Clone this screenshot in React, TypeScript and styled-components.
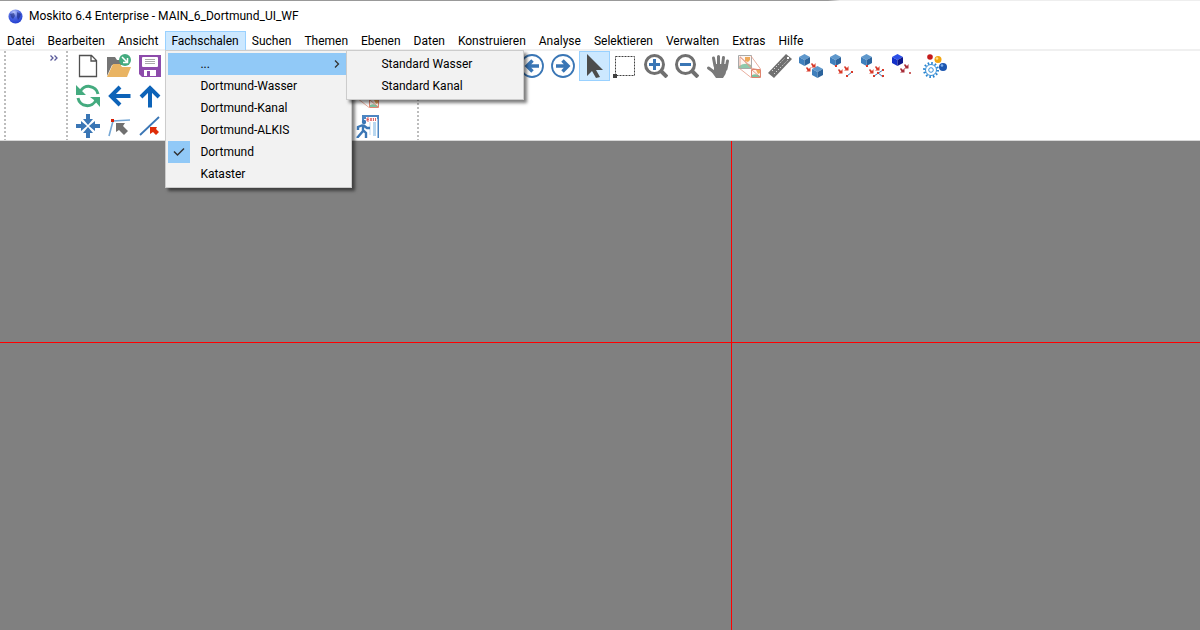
import React from "react";
import styled, { createGlobalStyle } from "styled-components";

const Global = createGlobalStyle`
  * { box-sizing: border-box; }
  body { margin: 0; background: #fff; color: #000; font: 12px/16px Roboto, "Open Sans", sans-serif; }
  button { font: inherit; color: inherit; }
`;

const Window = styled.div`
  display: flex;
  flex-direction: column;
  min-height: 100vh;
  overflow: hidden;
`;

const TitleBar = styled.header`
  display: flex;
  align-items: center;
  gap: 6px;
  height: 31px;
  padding: 1px 8px 0;
  background: linear-gradient(to right, #999 69%, #eee 70%) top / 100% 1px no-repeat;
`;

const Title = styled.h1`
  margin: 0;
  font-size: 12px;
  font-weight: 400;
  line-height: 16px;
  white-space: nowrap;
`;

const MenuBar = styled.nav`
  display: flex;
  height: 20px;
  padding-left: 1px;
  border-bottom: 2px solid #f0f0f0;
`;

const MenuSlot = styled.div`
  position: relative;
`;

const MenuTitle = styled.button<{ $open?: boolean }>`
  height: 20px;
  padding: 0 6px 0 5px;
  white-space: nowrap;
  line-height: 18px;
  border: 1px solid ${(p) => (p.$open ? "#99d1ff" : "transparent")};
  background: ${(p) => (p.$open ? "#cce8ff" : "transparent")};
`;

const Popup = styled.div`
  position: absolute;
  z-index: 2;
  top: 19px;
  left: 0;
  width: 187px;
  padding: 2px;
  border: 1px solid #ccc;
  background: #f2f2f2;
  box-shadow: 3px 3px 3px rgba(0, 0, 0, 0.5);
`;

const SubPopup = styled(Popup)`
  top: -1px;
  left: 180px;
  width: 178px;
`;

const PopupItem = styled.button<{ $active?: boolean }>`
  display: grid;
  grid-template-columns: 22px 1fr 16px;
  column-gap: 10px;
  align-items: center;
  width: 100%;
  height: 22px;
  padding: 0;
  border: 0;
  text-align: left;
  white-space: nowrap;
  background: ${(p) => (p.$active ? "#91c9f7" : "transparent")};
`;

const CheckCell = styled.span<{ $on?: boolean }>`
  display: flex;
  align-items: center;
  justify-content: center;
  height: 22px;
  background: ${(p) => (p.$on ? "#91c9f7" : "transparent")};
`;

const ToolArea = styled.div`
  display: flex;
  height: 90px;
  padding-left: 4px;
  border-bottom: 1px solid #d8d8d8;
`;

const Bar = styled.div<{ $width?: number }>`
  display: flex;
  flex: none;
  gap: 5px;
  width: ${(p) => (p.$width ? p.$width + "px" : "auto")};
`;

const Grip = styled.div`
  width: 2px;
  background: repeating-linear-gradient(#bdbdbd 0 2px, transparent 2px 4px);
`;

const Overflow = styled.button`
  display: flex;
  align-self: flex-start;
  margin-left: auto;
  padding: 4px 8px;
  border: 0;
  background: none;
`;

const Buttons = styled.div`
  display: grid;
  grid-auto-columns: 31px;
  grid-template-rows: repeat(3, 30px);
`;

const Tool = styled.button<{ $row: number; $col: number; $active?: boolean }>`
  display: flex;
  align-items: center;
  justify-content: center;
  grid-area: ${(p) => p.$row} / ${(p) => p.$col};
  padding: 0 1px 0 0;
  border: 1px solid ${(p) => (p.$active ? "#99d1ff" : "transparent")};
  background: ${(p) => (p.$active ? "#cce8ff" : "transparent")};
`;

const Canvas = styled.main`
  position: relative;
  flex: 1;
  min-height: 200px;
  background: #808080;
`;

const HorizontalAxis = styled.div`
  position: absolute;
  top: 41.2%;
  width: 100%;
  height: 1px;
  background: #f00;
`;

const VerticalAxis = styled.div`
  position: absolute;
  left: 60.9%;
  width: 1px;
  height: 100%;
  background: #f00;
`;

const blue = "#0d63b8";
const steel = "#3a76b5";
const grey = "#707070";

const Cube = ({ x, y, c = "#3f7fbc", top = "#5f98cc", side = "#2b639c" }: { x: number; y: number; c?: string; top?: string; side?: string }) => (
  <g transform={`translate(${x} ${y})`}>
    <path d="M0 3 5.500 0 11 3 5.500 6z" fill={top} />
    <path d="M0 3v6l5.500 3V6z" fill={c} />
    <path d="M11 3v6l-5.500 3V6z" fill={side} />
  </g>
);

const RedArrow = ({ x, y, c = "#d83a2a" }: { x: number; y: number; c?: string }) => (
  <path transform={`translate(${x} ${y})`} d="M0 1 1 0 3 2 4.500 0V4.500H0L1.500 3.500z" fill={c} />
);

const MapSheets = () => (
  <g fill="none">
    <path d="M1.500 1.500h13v13h-13z" fill="#fdf6f2" stroke="#a9a9a9" />
    <path d="M2 12q6-4 12-1v3H2z" fill="#8fc9ac" />
    <path d="M8 3h5v3l-2 2-3-1z" fill="#eda95a" />
    <path d="M3 2.500l11 10M2 14l12 9.500M14 2l9.500 13M3 3v10M3 3l20 20M14 14l9 2" stroke="#e39a86" strokeWidth=".8" />
    <path d="M14.500 15.500h9v8h-9z" fill="#fff4ed" stroke="#df8570" />
    <path d="M15 21q4-2 8 1v1h-8z" fill="#7fc2a0" />
    <path d="M19 16h4v3l-2 1z" fill="#eda95a" />
    <path d="M15 16l8 7" stroke="#df8570" strokeWidth=".8" />
  </g>
);

const icons: Record<string, React.ReactNode> = {
  new: <path d="M3.500 1.500h12l5 5v16h-17zM15 1.500v5.500h5.500" fill="#fff" stroke="#505050" strokeWidth="1.300" />,
  open: (
    <>
      <path d="M0 3h8l2 3h6v5H5L0 22z" fill="#757575" />
      <path d="M6 10h7l2 3h9l-4 10H0z" fill="#e9b463" />
      <circle cx="18" cy="6" r="6" fill="#44ab7f" />
      <path d="M15 3l5 5M20.500 4v4.500H16" stroke="#fff" strokeWidth="1.500" fill="none" />
    </>
  ),
  save: (
    <>
      <path d="M1 1h22v22H4l-3-3z" fill="#8d4bab" />
      <rect x="4" y="3" width="16" height="10" rx="1" fill="#fff" />
      <path d="M7 5.500h10M7 7.500h10M7 9.500h10" stroke="#aaa" />
      <path d="M6 16h12v6H6z" fill="#fff" />
      <path d="M9 17h3v5H9z" fill="#8d4bab" />
    </>
  ),
  refresh: (
    <>
      <path d="M4 8A9.500 9.500 0 0 1 22 10M20 16A9.500 9.500 0 0 1 2 14" fill="none" stroke="#44ab7f" strokeWidth="3" />
      <path d="M0 1v10h10L7 8zM24 23V13H14l4 3z" fill="#44ab7f" />
    </>
  ),
  left: <path d="M23.500 12H3M13 3l-9 9 9 9" fill="none" stroke={blue} strokeWidth="4" />,
  up: <path d="M12 23.500V3M3 13l9-9 9 9" fill="none" stroke={blue} strokeWidth="4" />,
  center: (
    <path d="M10 0h4v5h3l-5 6-5-6h3zM10 24h4v-5h3l-5-6-5 6h3zM0 10v4h5v3l6-5-6-5v3zM24 10v4h-5v3l-6-5 6-5v3z" fill={steel} />
  ),
  vertex: (
    <>
      <path d="M23 6 6 7 2 22" fill="none" stroke="#75a7d5" strokeWidth="1.600" />
      <rect x="4" y="5" width="3" height="3" fill="#d81e05" />
      <path d="M9 9h9l-2 3 5 5-4 4-5-5-3 2z" fill={grey} />
    </>
  ),
  segment: (
    <>
      <path d="M2 21 21 3" stroke={steel} strokeWidth="1.800" />
      <path d="M12 13h7l-1 2 3 3-3 3-3-3-3 2z" fill="#df2c08" />
    </>
  ),
  sheets: <MapSheets />,
  exit: (
    <>
      <path d="M7 1h17v23h-1.500V5H9v3H7z" fill="#4d86c2" />
      <path d="M14 7h2v14h-2z" fill="#dcebf8" />
      <path d="M18 6h3v16h-3z" fill="#b8d7f0" />
      <path d="M11 3h11v5H11z" fill="#fff" />
      <path d="M12 4v3M12 4h2M12 5.500h2M12 7h2M15 4l2 3M17 4l-2 3M18.500 4v3M20.500 4v3" stroke="#d84040" strokeWidth=".8" />
      <circle cx="9" cy="8" r="2.200" fill={steel} />
      <path d="M8 11 3 13v3M8 11l4 3h3M8 11v6l-6 7M8 16l3 3v5" fill="none" stroke={steel} strokeWidth="2.400" />
    </>
  ),
  back: (
    <>
      <circle cx="12" cy="12" r="11" fill="none" stroke={steel} strokeWidth="1.800" />
      <path d="M19 12H7M12.500 6.500 7 12l5.500 5.500" fill="none" stroke={steel} strokeWidth="3.500" />
    </>
  ),
  forward: (
    <>
      <circle cx="12" cy="12" r="11" fill="none" stroke={steel} strokeWidth="1.800" />
      <path d="M5 12H17M11.500 6.500 17 12l-5.500 5.500" fill="none" stroke={steel} strokeWidth="3.500" />
    </>
  ),
  cursor: <path d="M5 0v22l5-5 4 7 4-1-4-7h7z" fill="#4c4c4c" />,
  marquee: (
    <>
      <rect x="2.500" y="2.500" width="19" height="19" fill="none" stroke="#404040" strokeDasharray="2 1" />
      <path d="M0 20h4v4H0z" fill="#404040" />
    </>
  ),
  zoomIn: (
    <>
      <path d="M17 17l6 6" stroke={grey} strokeWidth="4" />
      <circle cx="10.500" cy="10.500" r="9" fill="#fff" stroke={grey} strokeWidth="3" />
      <path d="M5 10.500h11M10.500 5v11" stroke={steel} strokeWidth="3" />
    </>
  ),
  zoomOut: (
    <>
      <path d="M17 17l6 6" stroke={grey} strokeWidth="4" />
      <circle cx="10.500" cy="10.500" r="9" fill="#fff" stroke={grey} strokeWidth="3" />
      <path d="M5 10.500h11" stroke={steel} strokeWidth="3" />
    </>
  ),
  hand: (
    <>
      <path d="M9 12 7.500 4M12.500 12V2.500M16.500 12l1-8.500M20 15l1.500-8M8 18l-5.500-4" stroke="#7a7a7a" strokeWidth="3" strokeLinecap="round" />
      <path d="M8 10h12l1.500 2-2 8-2.500 4h-7l-5-7 3-1z" fill="#7a7a7a" />
    </>
  ),
  ruler: (
    <>
      <path d="M0 19 18 0l6 5L6 24z" fill={grey} />
      <path d="M4 17 17 4M6 20 20 6" stroke="#fff" strokeWidth="1" strokeDasharray="1 2" />
      <path d="M19 3l2 2M21 3l-2 2" stroke="#fff" />
    </>
  ),
  cubes: (<><Cube x={0} y={0} /><Cube x={13} y={12} /><RedArrow x={12} y={9} /><RedArrow x={7} y={13} /></>),
  cubeLine: (
    <>
      <Cube x={0} y={0} /><RedArrow x={14} y={12} /><RedArrow x={8} y={15} />
      <path d="M17 22l5-4" stroke={steel} /><path d="M16 21h2v2h-2zM21 17h2v2h-2zM5 11h2v2H5z" fill="#d83a2a" />
    </>
  ),
  cubeNet: (
    <>
      <Cube x={0} y={0} /><RedArrow x={14} y={12} /><RedArrow x={8} y={15} />
      <path d="M13 22l9-6M16 18l6 5" stroke={steel} />
      <path d="M12 21h2v2h-2zM21 15h2v2h-2zM21 21h2v2h-2zM16 18h2v2h-2zM5 11h2v2H5z" fill="#d83a2a" />
    </>
  ),
  cubePoint: (
    <>
      <Cube x={0} y={0} c="#1430c8" top="#2c50e8" side="#0c168a" />
      <RedArrow x={12} y={10} c="#a82c38" /><RedArrow x={8} y={14} c="#a82c38" />
      <path d="M17 18h2v2h-2z" fill="#c66" />
    </>
  ),
  gear: (
    <>
      <circle cx="8" cy="16" r="6.800" fill="#fff" stroke="#2684d0" strokeWidth="2.400" strokeDasharray="1.600 1.960" />
      <circle cx="8" cy="16" r="5.500" fill="#fff" stroke="#2684d0" strokeWidth=".9" />
      <circle cx="8" cy="16" r="2.300" fill="#fff" stroke="#2684d0" strokeWidth=".9" />
      <circle cx="7" cy="3" r="2.800" fill="#c41a1a" />
      <circle cx="15" cy="5.500" r="3.500" fill="#f2a510" />
      <circle cx="14" cy="4.500" r="1.300" fill="#ffe08a" />
      <circle cx="20" cy="13" r="4" fill="#1c56b0" />
      <circle cx="19" cy="11.500" r="1.300" fill="#7fb0ee" />
    </>
  ),
};

const Icon = ({ name }: { name: string }) => (
  <svg width="24" height="24" viewBox="0 0 24 24" aria-hidden="true">{icons[name]}</svg>
);

type ToolDef = { icon: string; label: string; row: number; col: number; active?: boolean };

const fileTools: ToolDef[] = [
  { icon: "new", label: "Neu", row: 1, col: 1 },
  { icon: "open", label: "Öffnen", row: 1, col: 2 },
  { icon: "save", label: "Speichern", row: 1, col: 3 },
  { icon: "refresh", label: "Aktualisieren", row: 2, col: 1 },
  { icon: "left", label: "Nach links", row: 2, col: 2 },
  { icon: "up", label: "Nach oben", row: 2, col: 3 },
  { icon: "sheets", label: "Kartenblätter", row: 2, col: 10 },
  { icon: "center", label: "Zentrieren", row: 3, col: 1 },
  { icon: "vertex", label: "Stützpunkt", row: 3, col: 2 },
  { icon: "segment", label: "Segment", row: 3, col: 3 },
  { icon: "exit", label: "Beenden", row: 3, col: 10 },
];

const viewTools: ToolDef[] = [
  ["back", "Zurück"], ["forward", "Vor"], ["cursor", "Auswahl"], ["marquee", "Rechteck"],
  ["zoomIn", "Vergrößern"], ["zoomOut", "Verkleinern"], ["hand", "Verschieben"],
  ["sheets", "Ausschnitt"], ["ruler", "Messen"], ["cubes", "Objekte"], ["cubeLine", "Linien"],
  ["cubeNet", "Netz"], ["cubePoint", "Punkte"], ["gear", "Einstellungen"],
].map(([icon, label], i) => ({ icon, label, row: 1, col: i + 4, active: icon === "cursor" }));

const ToolButtons = ({ tools }: { tools: ToolDef[] }) => (
  <Buttons>
    {tools.map((t) => (
      <Tool key={t.label} aria-label={t.label} $row={t.row} $col={t.col} $active={t.active}>
        <Icon name={t.icon} />
      </Tool>
    ))}
  </Buttons>
);

const menus = ["Datei", "Bearbeiten", "Ansicht", "Fachschalen", "Suchen", "Themen", "Ebenen", "Daten",
  "Konstruieren", "Analyse", "Selektieren", "Verwalten", "Extras", "Hilfe"];
const shells = ["Dortmund-Wasser", "Dortmund-Kanal", "Dortmund-ALKIS", "Dortmund", "Kataster"];

const ShellMenu = () => (
  <Popup>
    <PopupItem $active>
      <span /><span>...</span>
      <svg width="8" height="10" viewBox="0 0 8 10" aria-hidden="true">
        <path d="M2 1.500l3.500 3.500L2 8.500" fill="none" stroke="#333" strokeWidth="1.300" />
      </svg>
    </PopupItem>
    {shells.map((s) => (
      <PopupItem key={s}>
        <CheckCell $on={s === "Dortmund"}>
          {s === "Dortmund" && (
            <svg width="12" height="10" viewBox="0 0 12 10" aria-hidden="true">
              <path d="M1 4.500l3.500 3.500L11 1.500" fill="none" stroke="#333" strokeWidth="1.500" />
            </svg>
          )}
        </CheckCell>
        <span>{s}</span>
      </PopupItem>
    ))}
    <SubPopup>
      {["Standard Wasser", "Standard Kanal"].map((s) => (
        <PopupItem key={s}><span /><span>{s}</span></PopupItem>
      ))}
    </SubPopup>
  </Popup>
);

export default function App() {
  return (
    <Window>
      <Global />
      <TitleBar>
        <svg width="15" height="15" viewBox="0 0 15 15" aria-hidden="true">
          <defs>
            <radialGradient id="globe" cx=".4" cy=".2" r=".8">
              <stop offset="0" stopColor="#b8c4f8" /><stop offset=".5" stopColor="#4c66e0" /><stop offset="1" stopColor="#2440d0" />
            </radialGradient>
          </defs>
          <circle cx="7.500" cy="7.500" r="7" fill="url(#globe)" />
          <path d="M2 5l4-1 1 3-2 3-2-2zM9 3l4 2-1 3-2 3-1-3z" fill="#18267c" opacity=".6" />
        </svg>
        <Title>Moskito 6.4 Enterprise - MAIN_6_Dortmund_UI_WF</Title>
      </TitleBar>
      <MenuBar>
        {menus.map((m) => (
          <MenuSlot key={m}>
            <MenuTitle $open={m === "Fachschalen"}>{m}</MenuTitle>
            {m === "Fachschalen" && <ShellMenu />}
          </MenuSlot>
        ))}
      </MenuBar>
      <ToolArea>
        <Bar $width={62}>
          <Grip />
          <Overflow aria-label="Mehr">
            <svg width="8" height="6" viewBox="0 0 8 6" aria-hidden="true">
              <path d="M.5.5 3 3 .5 5.500M4.500.5 7 3 4.500 5.500" fill="none" stroke="#5a5a9a" strokeWidth="1.300" />
            </svg>
          </Overflow>
        </Bar>
        <Bar $width={351}><Grip /><ToolButtons tools={fileTools} /></Bar>
        <Bar><Grip /><ToolButtons tools={viewTools} /></Bar>
      </ToolArea>
      <Canvas><HorizontalAxis /><VerticalAxis /></Canvas>
    </Window>
  );
}
